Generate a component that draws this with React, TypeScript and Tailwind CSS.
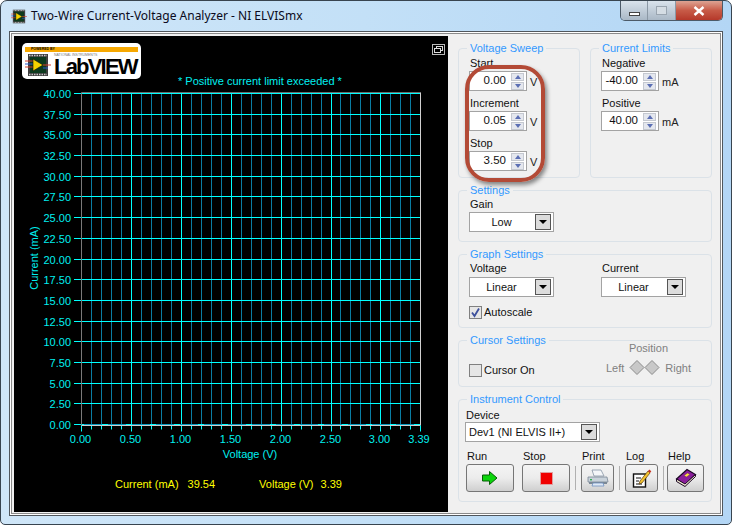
import type { ReactNode } from 'react'

const font = { fontFamily: '"Liberation Sans", "Noto Sans", sans-serif' }

// chart geometry, in screen pixels (the svg viewBox starts at the panel corner)
const plotLeft = 81.5
const plotRight = 420.5
const plotTop = 93.5
const plotBottom = 425.5
const snap = (v: number) => Math.floor(v) + 0.5

const yLabels = Array.from({ length: 17 }, (_, i) => (40 - i * 2.5).toFixed(2))
const xMajor = ['0.00', '0.50', '1.00', '1.50', '2.00', '2.50', '3.00']
const xAt = (i: number) => snap(81.5 + i * 9.98)
const yAt = (i: number) => snap(93.5 + i * 20.69)

function LabviewGlyph({ className }: { className?: string }) {
  return (
    <svg className={className} viewBox="0 0 26 22" aria-hidden="true">
      <rect x="3" y="0" width="20" height="22" fill="#3d3d3d" />
      <path d="M4 1.500h18M4 20.500h18" stroke="#c8c8c8" strokeWidth="1.600" strokeDasharray="1.500 1" />
      <rect x="5" y="3" width="16" height="16" fill="#0d3a1e" />
      <path d="M0 7h8M0 13h8M18 11h8" stroke="#d6402c" strokeWidth="1" />
      <path d="M0 10h8M18 14h5" stroke="#2d57c8" strokeWidth="1" />
      <path d="M8 5l10 6-10 6z" fill="#f5d400" stroke="#111" strokeWidth="0.600" />
    </svg>
  )
}

function Logo() {
  return (
    <div className="flex h-[36px] w-[119px] flex-col rounded-[5px] bg-white px-[3px] pt-[4px]">
      <div className="flex h-[5px] shrink-0 items-center bg-[#f7a800] pl-[6px] text-[3.500px] font-bold leading-none text-black">
        POWERED BY
      </div>
      <div className="flex">
        <LabviewGlyph className="mt-[2px] h-[22px] w-[26px] shrink-0" />
        <div className="ml-[3px] flex flex-col">
          <span className="mt-[1px] whitespace-nowrap text-[3.500px] leading-[4px] text-[#777]">NATIONAL INSTRUMENTS</span>
          <span className="text-[22px] font-bold leading-[19px] tracking-[-1.800px] text-black">LabVIEW</span>
        </div>
      </div>
    </div>
  )
}

function Chart() {
  const minors: number[] = []
  for (let i = 0; i < 34; i++) {
    if (i % 5 !== 0) minors.push(xAt(i))
  }
  const dashes: number[] = []
  for (let x = 84; x < 404; x += 24) dashes.push(x)

  return (
    <svg className="block h-[375px] w-[434px]" viewBox="14 87 434 375" aria-hidden="true">
      {minors.map((x) => (
        <g key={x}>
          <line x1={x} x2={x} y1={plotTop} y2={plotBottom} stroke="#0a7da3" />
          <line x1={x} x2={x} y1={plotBottom} y2={plotBottom + 4} stroke="#00ffff" />
        </g>
      ))}
      {xMajor.map((t, i) => (
        <g key={t}>
          <line x1={xAt(i * 5)} x2={xAt(i * 5)} y1={plotTop} y2={plotBottom + 6} stroke="#00ffff" />
          <text x={xAt(i * 5) - 1} y={443} textAnchor="middle" fontSize="11" fill="#00f0f0">
            {t}
          </text>
        </g>
      ))}
      {yLabels.map((t, i) => (
        <g key={t}>
          <line x1={74} x2={plotRight} y1={yAt(i)} y2={yAt(i)} stroke="#00ffff" />
          <text x={71} y={yAt(i) + 4} textAnchor="end" fontSize="11" fill="#00f0f0">
            {t}
          </text>
        </g>
      ))}
      <line x1={plotLeft} x2={plotRight} y1={plotTop - 1} y2={plotTop - 1} stroke="#6b6b6b" />
      <line x1={plotLeft} x2={plotLeft} y1={plotTop - 1} y2={plotBottom} stroke="#7a7a7a" />
      <line x1={plotLeft} x2={plotRight} y1={plotBottom} y2={plotBottom} stroke="#d0d0d0" />
      <line x1={plotRight} x2={plotRight} y1={plotTop - 1} y2={plotBottom} stroke="#d0d0d0" />
      {dashes.map((x) => (
        <line key={x} x1={x} x2={x + 18} y1={plotBottom - 1} y2={plotBottom - 1} stroke="#0a9cc0" />
      ))}
      <line x1={plotRight} x2={plotRight} y1={plotBottom} y2={plotBottom + 6} stroke="#00ffff" />
      <text x={419} y={443} textAnchor="middle" fontSize="11" fill="#00f0f0">
        3.39
      </text>
      <text x={250} y={458} textAnchor="middle" fontSize="11" fill="#00f0f0">
        Voltage (V)
      </text>
      <text x={38} y={258} textAnchor="middle" fontSize="11" fill="#00f0f0" transform="rotate(-90 38 258)">
        Current (mA)
      </text>
    </svg>
  )
}

function Group({ title, className, children }: { title: string; className: string; children: ReactNode }) {
  return (
    <fieldset className={`rounded-[4px] border border-[#dbe2e8] pl-[10px] ${className}`}>
      <legend className="-ml-[2px] h-[14px] px-[3px] text-[11px] leading-[14px] text-[#3399ff]">{title}</legend>
      {children}
    </fieldset>
  )
}

function Label({ children }: { children: ReactNode }) {
  return <div className="h-[15px] pl-px text-[11px] leading-[14px] text-[#111]">{children}</div>
}

function Numeric({ value, unit }: { value: string; unit: string }) {
  return (
    <div className="mb-[5px] flex items-center">
      <div className="flex h-[20px] w-[58px] items-center border border-[#a3a3a3] bg-white">
        <span className="w-[36px] text-right text-[11.500px] leading-none text-[#111]">{value}</span>
        <div className="ml-[5px] flex w-[13px] flex-col gap-px">
          <div className="flex h-[8px] items-center justify-center border border-[#c4c8d0] bg-[#e4e7ee]">
            <div className="h-0 w-0 border-x-[3px] border-b-[4px] border-x-transparent border-b-[#5b6fb4]" />
          </div>
          <div className="flex h-[8px] items-center justify-center border border-[#c4c8d0] bg-[#e4e7ee]">
            <div className="h-0 w-0 border-x-[3px] border-t-[4px] border-x-transparent border-t-[#5b6fb4]" />
          </div>
        </div>
      </div>
      <span className="ml-[3px] pt-[2px] text-[11px] leading-none text-[#222]">{unit}</span>
    </div>
  )
}

function Dropdown({ value, className, left }: { value: string; className: string; left?: boolean }) {
  return (
    <div className={`flex items-center border border-[#a3a3a3] bg-white pr-[2px] ${className}`}>
      <span className={`flex-1 text-[11px] leading-none text-[#111] ${left ? 'pl-[3px] text-left' : 'pr-[2px] text-center'}`}>
        {value}
      </span>
      <div className="flex h-[16px] w-[16px] items-center justify-center border border-[#555] bg-[#dcdcdc]">
        <div className="h-0 w-0 border-x-[4px] border-t-[4px] border-x-transparent border-t-black" />
      </div>
    </div>
  )
}

function Check({ label, checked }: { label: string; checked?: boolean }) {
  return (
    <div className="flex items-center gap-[2px]">
      <div className="flex h-[13px] w-[13px] items-center justify-center border border-[#808080] bg-[#e6e6e6]">
        {checked && (
          <svg className="h-[11px] w-[11px]" viewBox="0 0 11 11" aria-hidden="true">
            <path d="M2 5.500l2.500 3.500L9 1.500" fill="none" stroke="#3c4f9c" strokeWidth="1.800" />
          </svg>
        )}
      </div>
      <span className="text-[11px] leading-none text-[#111]">{label}</span>
    </div>
  )
}

function ToolButton({ label, className, children }: { label: string; className: string; children: ReactNode }) {
  return (
    <div className={`flex flex-col ${className}`}>
      <span className="h-[16px] pl-px pt-px text-[11px] leading-[14px] text-[#111]">{label}</span>
      <div className="flex h-[28px] items-center justify-center rounded-[3px] border border-[#767676] bg-gradient-to-b from-[#f4f4f4] via-[#ececec] to-[#cfcfcf]">
        {children}
      </div>
    </div>
  )
}

function Separator() {
  return <div className="mx-[5px] mt-[18px] h-[24px] w-px self-start bg-[#b0b0b0]" />
}

function PrinterIcon() {
  return (
    <svg className="h-[18px] w-[24px]" viewBox="0 0 24 18" aria-hidden="true">
      <path d="M6 1h9l3 6H8z" fill="#f4f6f8" stroke="#8794a4" strokeWidth="0.800" />
      <path d="M2 8h19l1 5H2z" fill="#c9d2da" stroke="#7a8794" strokeWidth="0.800" />
      <path d="M3 13h18v2H3z" fill="#7c8996" />
      <path d="M7 14h10l1 3H6z" fill="#dfe9f5" stroke="#6f8fc0" strokeWidth="0.800" />
      <rect x="4" y="10" width="2" height="1.400" fill="#30b050" />
    </svg>
  )
}

function LogIcon() {
  return (
    <svg className="h-[20px] w-[20px]" viewBox="0 0 20 20" aria-hidden="true">
      <rect x="1.500" y="6" width="12" height="13" fill="#fff" stroke="#111" strokeWidth="1.400" />
      <path d="M4 10h5M4 13h3M4 16h6" stroke="#111" strokeWidth="1" />
      <path d="M8 13l8-10 2 2-8 10-3 1z" fill="#f2c230" stroke="#5a3b10" strokeWidth="0.700" />
      <path d="M16 3l1.300-1.600 2 1.800L18 5z" fill="#c8321e" />
    </svg>
  )
}

function BookIcon() {
  return (
    <svg className="h-[20px] w-[22px]" viewBox="0 0 22 20" aria-hidden="true">
      <path d="M1.500 11L12 1.500l8.500 5L10 17z" fill="#8a1f9a" stroke="#1c0824" strokeWidth="1.200" />
      <path d="M1.500 11v2.500l8.500 5 10.500-10V6.500L10 16z" fill="#efe8d2" stroke="#1c0824" strokeWidth="1" />
      <path d="M9 7.500l3.500-2.500 2.500 1.500-3.500 2.500z" fill="#ffe040" stroke="#6a1a70" strokeWidth="0.500" />
    </svg>
  )
}

function WindowButtons() {
  return (
    <div className="flex h-[20px] overflow-hidden rounded-b-[5px] border border-t-0 border-[#4c5a68]">
      <div className="flex w-[27px] items-center justify-center border-r border-[#8b98a5] bg-gradient-to-b from-[#d9e3ec] to-[#aab8c6] pt-[3px]">
        <div className="mt-[3px] h-[4px] w-[11px] border border-[#444] bg-white" />
      </div>
      <div className="flex w-[28px] items-center justify-center border-r border-[#8b98a5] bg-gradient-to-b from-[#d9e3ec] to-[#aab8c6]">
        <div className="h-[9px] w-[11px] border border-[#9aa5b0] bg-[#d5dde4]" />
      </div>
      <div className="flex w-[46px] items-center justify-center bg-gradient-to-b from-[#dca393] via-[#c75a47] to-[#b5382a]">
        <svg className="h-[10px] w-[12px]" viewBox="0 0 12 10" aria-hidden="true">
          <path d="M1.500 1l9 8M10.500 1l-9 8" stroke="#fff" strokeWidth="2.400" />
        </svg>
      </div>
    </div>
  )
}

export default function App() {
  return (
    <div className="relative h-[525px] w-[732px] overflow-hidden bg-white" style={font}>
      <div className="flex h-full flex-col rounded-t-[7px] rounded-b-[5px] border border-[#38444f] bg-gradient-to-r from-[#cfe6f8] via-[#c3e0f7] to-[#b3d6f5]">
        {/* 标题栏 */}
        <div className="flex h-[30px] shrink-0 items-start justify-between pr-[8px]">
          <div className="flex items-center pl-[10px] pt-[7px]">
            <LabviewGlyph className="h-[15px] w-[16px]" />
            <span
              className="ml-[4px] text-[12px] leading-[16px] text-[#0a0a20]"
              style={{ fontFamily: '"Noto Sans", sans-serif' }}>
              Two-Wire Current-Voltage Analyzer - NI ELVISmx
            </span>
          </div>
          <WindowButtons />
        </div>

        {/* 窗口内容 */}
        <div className="mx-[8px] mb-[8px] flex min-h-0 flex-1 border border-[#50565c] bg-[#f0f0f0] pb-[3px] pl-[4px] pt-[4px] shadow-[inset_0_0_0_1px_#ffffff,inset_0_0_0_2px_#8a8a8a]">
          <div className="flex h-full w-[434px] shrink-0 flex-col bg-black">
            <div className="flex h-[39px] shrink-0 items-start justify-between pl-[8px] pr-[3px] pt-[7px]">
              <Logo />
              <div className="relative mt-px h-[11px] w-[13px] border border-[#bbb]">
                <div className="absolute right-px top-px h-[5px] w-[7px] border border-[#ddd]" />
                <div className="absolute bottom-px left-px h-[5px] w-[7px] border border-[#ddd] bg-black" />
              </div>
            </div>
            <div className="h-[12px] shrink-0 pl-[164px] text-[11px] leading-[12px] text-[#00f0f0]">
              * Positive current limit exceeded *
            </div>
            <Chart />
            <div className="flex pl-[101px] pt-[15px] text-[11px] leading-[14px] text-[#ffff00]">
              <span>Current (mA)</span>
              <span className="ml-[9px]">39.54</span>
              <span className="ml-[44px]">Voltage (V)</span>
              <span className="ml-[7px]">3.39</span>
            </div>
          </div>

          <div className="flex flex-1 flex-col gap-[5px] pl-[10px] pt-[5px]">
            <div className="flex gap-[10px]">
              <Group title="Voltage Sweep" className="h-[137px] w-[122px] pt-px">
                <Label>Start</Label>
                <Numeric value="0.00" unit="V" />
                <Label>Increment</Label>
                <Numeric value="0.05" unit="V" />
                <Label>Stop</Label>
                <Numeric value="3.50" unit="V" />
              </Group>
              <Group title="Current Limits" className="h-[137px] w-[122px] pt-px">
                <Label>Negative</Label>
                <Numeric value="-40.00" unit="mA" />
                <Label>Positive</Label>
                <Numeric value="40.00" unit="mA" />
              </Group>
            </div>

            <Group title="Settings" className="h-[59px] w-[254px]">
              <Label>Gain</Label>
              <Dropdown value="Low" className="h-[20px] w-[85px]" />
            </Group>

            <Group title="Graph Settings" className="h-[81px] w-[254px]">
              <div className="flex gap-[47px]">
                <div>
                  <Label>Voltage</Label>
                  <Dropdown value="Linear" className="mt-px h-[20px] w-[85px]" />
                </div>
                <div>
                  <Label>Current</Label>
                  <Dropdown value="Linear" className="mt-px h-[20px] w-[85px]" />
                </div>
              </div>
              <div className="mt-[9px]">
                <Check label="Autoscale" checked />
              </div>
            </Group>

            <Group title="Cursor Settings" className="h-[54px] w-[254px]">
              <div className="flex justify-between pr-[20px]">
                <div className="pt-[17px]">
                  <Check label="Cursor On" />
                </div>
                <div className="-mt-[6px] flex flex-col items-center text-[11px] leading-[14px] text-[#808080]">
                  <span>Position</span>
                  <div className="mt-[5px] flex items-center gap-[5px]">
                    <span>Left</span>
                    <svg className="h-[15px] w-[31px]" viewBox="0 0 31 15" aria-hidden="true">
                      <path d="M8 .5l7 7-7 7-7-7zM23 .5l7 7-7 7-7-7z" fill="#c8c8c8" stroke="#8c8c8c" />
                    </svg>
                    <span>Right</span>
                  </div>
                </div>
              </div>
            </Group>

            <Group title="Instrument Control" className="h-[110px] w-[254px]">
              <div className="-ml-[4px]">
                <div className="h-[16px] pl-px pt-[2px] text-[11px] leading-[14px] text-[#111]">Device</div>
                <Dropdown value="Dev1 (NI ELVIS II+)" left className="h-[20px] w-[135px]" />
                <div className="mt-[6px] flex">
                  <ToolButton label="Run" className="ml-px w-[48px]">
                    <svg className="h-[14px] w-[16px]" viewBox="0 0 16 14" aria-hidden="true">
                      <path d="M.5 4h7V.5L15 7l-7.500 6.500V10h-7z" fill="#0bd40b" stroke="#065c06" />
                    </svg>
                  </ToolButton>
                  <ToolButton label="Stop" className="ml-[8px] w-[48px]">
                    <div className="h-[13px] w-[13px] border border-[#e0a0a0] bg-[#f00000]" />
                  </ToolButton>
                  <Separator />
                  <ToolButton label="Print" className="w-[33px]">
                    <PrinterIcon />
                  </ToolButton>
                  <Separator />
                  <ToolButton label="Log" className="w-[33px]">
                    <LogIcon />
                  </ToolButton>
                  <Separator />
                  <ToolButton label="Help" className="-ml-[2px] w-[37px]">
                    <BookIcon />
                  </ToolButton>
                </div>
              </div>
            </Group>
          </div>
        </div>
      </div>

      {/* 红色标注圈 */}
      <div className="absolute left-[465px] top-[65px] h-[117px] w-[80px] rounded-[24px] border-[4px] border-[#b34a36] shadow-[2px_3px_4px_rgba(0,0,0,0.45)]" />
    </div>
  )
}
